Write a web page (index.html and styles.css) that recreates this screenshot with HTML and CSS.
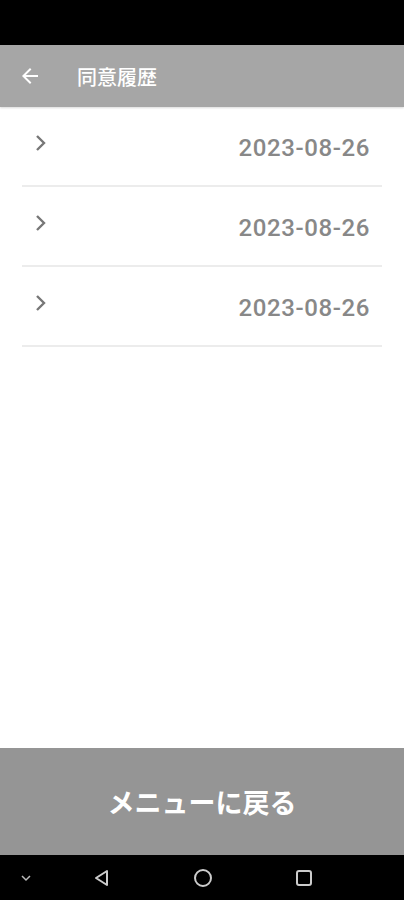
FILE: index.html
```html
<!DOCTYPE html>
<html lang="ja">
<head>
    <meta charset="UTF-8">
    <meta name="viewport" content="width=device-width, initial-scale=1.0">
    <title>同意履歴</title>
    <link rel="stylesheet" href="styles.css">
</head>
<body>
    <div class="screen">
        <div class="status-bar"></div>

        <header class="app-bar">
            <span class="back">
                <svg width="24" height="24" viewBox="0 0 24 24"><path d="M20 11H7.83l5.59-5.59L12 4l-8 8 8 8 1.41-1.41L7.83 13H20v-2z" fill="#fff"/></svg>
            </span>
            <h1>同意履歴</h1>
        </header>

        <main class="list">
            <div class="item">
                <svg class="chev" width="14" height="18" viewBox="0 0 14 18"><path d="M3 2l7 7-7 7" fill="none" stroke="#777" stroke-width="2.4"/></svg>
                <span class="date">2023-08-26</span>
            </div>
            <div class="item">
                <svg class="chev" width="14" height="18" viewBox="0 0 14 18"><path d="M3 2l7 7-7 7" fill="none" stroke="#777" stroke-width="2.4"/></svg>
                <span class="date">2023-08-26</span>
            </div>
            <div class="item">
                <svg class="chev" width="14" height="18" viewBox="0 0 14 18"><path d="M3 2l7 7-7 7" fill="none" stroke="#777" stroke-width="2.4"/></svg>
                <span class="date">2023-08-26</span>
            </div>
        </main>

        <button class="menu-btn">メニューに戻る</button>

        <nav class="nav-bar">
            <svg width="14" height="10" viewBox="0 0 14 10"><path d="M3 3l4 4 4-4" fill="none" stroke="#bbb" stroke-width="1.5"/></svg>
            <svg width="20" height="20" viewBox="0 0 20 20"><path d="M15 3v14L4 10z" fill="none" stroke="#ccc" stroke-width="2" stroke-linejoin="round"/></svg>
            <svg width="20" height="20" viewBox="0 0 20 20"><circle cx="10" cy="10" r="8" fill="none" stroke="#ccc" stroke-width="2"/></svg>
            <svg width="18" height="18" viewBox="0 0 18 18"><rect x="2" y="2" width="14" height="14" rx="2" fill="none" stroke="#ccc" stroke-width="2"/></svg>
        </nav>
    </div>
</body>
</html>
```

FILE: styles.css
```css
* {
    box-sizing: border-box;
}
body {
    margin: 0;
    font-family: Roboto, "Noto Sans CJK JP", sans-serif;
    background-color: #fff;
}
.screen {
    display: flex;
    flex-direction: column;
    height: 900px;
}
.status-bar {
    height: 45px;
    background-color: #000;
}
.app-bar {
    height: 62px;
    background-color: #a6a6a6;
    display: flex;
    align-items: center;
    padding-left: 18px;
    box-shadow: 0 1px 2px rgba(0, 0, 0, 0.15);
}
.back {
    display: flex;
    width: 24px;
    height: 24px;
}
.app-bar h1 {
    margin: 0 0 0 35px;
    font-size: 20px;
    font-weight: 500;
    color: #fff;
}
.list {
    flex: 1;
    padding: 0 22px;
}
.item {
    height: 80px;
    border-bottom: 2px solid #ececec;
    display: flex;
    justify-content: space-between;
    align-items: flex-start;
    padding: 27px 12px 0 12px;
}
.date {
    margin-top: 0;
    font-size: 24px;
    font-weight: 500;
    color: #888;
    letter-spacing: 0.6px;
}
.menu-btn {
    height: 107px;
    border: none;
    background-color: #959595;
    color: #fff;
    font-family: "Noto Sans CJK JP", sans-serif;
    font-size: 27px;
    font-weight: bold;
    padding: 0;
    width: 100%;
}
.nav-bar {
    height: 45px;
    background-color: #000;
    display: grid;
    grid-template-columns: 52px 100px 102px 100px;
    justify-items: center;
    align-items: center;
}
```
